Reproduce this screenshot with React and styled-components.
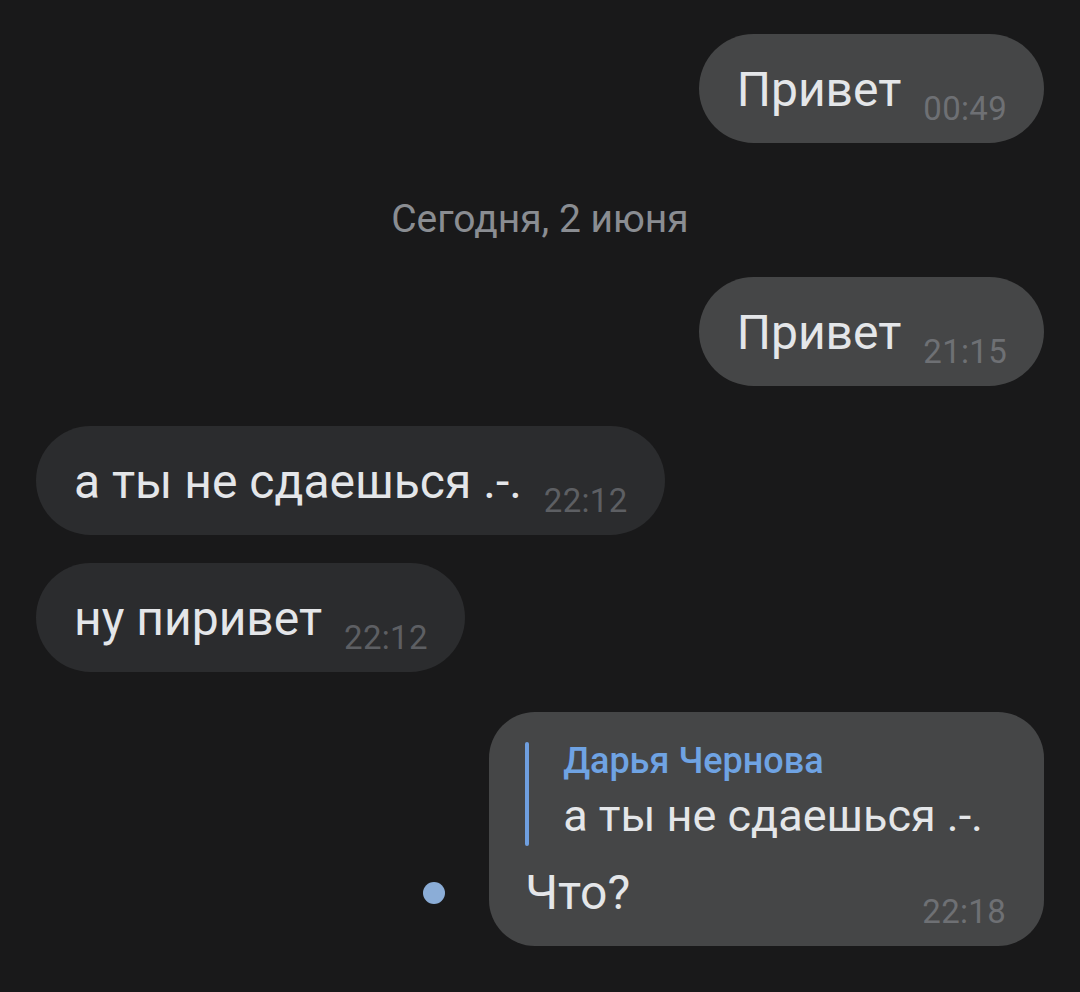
import React from "react";
import styled, { createGlobalStyle } from "styled-components";

const Global = createGlobalStyle`
  html, body { margin: 0; padding: 0; background: #19191a; }
  body { font-family: Roboto, "Noto Sans", "Liberation Sans", sans-serif; }
`;

const Page = styled.div`
  width: 1080px;
  height: 992px;
  box-sizing: border-box;
  padding: 34px 36px 0;
  background: #19191a;
  display: flex;
  flex-direction: column;
  overflow: hidden;
`;

const Row = styled.div`
  display: flex;
  justify-content: ${(p) => (p.$out ? "flex-end" : "flex-start")};
  align-items: flex-end;
  margin-top: ${(p) => p.$gap || 0}px;
`;

const Bubble = styled.div`
  display: flex;
  flex-direction: column;
  box-sizing: border-box;
  padding: ${(p) => (p.$reply ? "30px 38px 14px 36px" : "28px 37px 14px 38px")};
  border-radius: ${(p) => (p.$reply ? "46px" : "55px")};
  background: ${(p) => (p.$out ? "#454647" : "#2b2c2e")};
`;

const Line = styled.div`
  display: flex;
  align-items: flex-end;
  justify-content: space-between;
  gap: 22px;
  margin-top: ${(p) => p.$top || 0}px;
`;

const Text = styled.span`
  font-size: 48px;
  line-height: 56px;
  color: #e4e6e9;
  margin-bottom: 11px;
  white-space: nowrap;
`;

const Time = styled.span`
  font-size: 33px;
  line-height: 40px;
  letter-spacing: 0.3px;
  color: ${(p) => (p.$out ? "#6e7074" : "#5d5f63")};
  white-space: nowrap;
`;

const DateLabel = styled.div`
  text-align: center;
  font-size: 39px;
  line-height: 46px;
  color: #8a8d92;
  margin: 53px 0 0;
`;

const Quote = styled.div`
  display: flex;
  gap: 34px;
  padding-right: 23px;
`;

const QuoteBar = styled.div`
  width: 4px;
  border-radius: 2px;
  background: #6f9fdf;
`;

const QuoteBody = styled.div`
  display: flex;
  flex-direction: column;
  padding-bottom: 2px;
`;

const QuoteName = styled.span`
  font-size: 36px;
  line-height: 38px;
  font-weight: 500;
  color: #6fa3e3;
  white-space: nowrap;
`;

const QuoteText = styled.span`
  font-size: 45px;
  line-height: 56px;
  margin-top: 8px;
  color: #e4e6e9;
  white-space: nowrap;
`;

const UnreadDot = styled.div`
  width: 22px;
  height: 22px;
  border-radius: 50%;
  background: #8badd7;
  margin: 0 44px 42px 0;
`;

function Msg({ out, text, time }) {
  return (
    <Bubble $out={out}>
      <Line>
        <Text>{text}</Text>
        <Time $out={out}>{time}</Time>
      </Line>
    </Bubble>
  );
}

export default function App() {
  return (
    <>
      <Global />
      <Page>
        <Row $out>
          <Msg out text="Привет" time="00:49" />
        </Row>
        <DateLabel>Сегодня, 2 июня</DateLabel>
        <Row $out $gap={35}>
          <Msg out text="Привет" time="21:15" />
        </Row>
        <Row $gap={40}>
          <Msg text="а ты не сдаешься .-." time="22:12" />
        </Row>
        <Row $gap={28}>
          <Msg text="ну пиривет" time="22:12" />
        </Row>
        <Row $out $gap={40}>
          <UnreadDot />
          <Bubble $out $reply>
            <Quote>
              <QuoteBar />
              <QuoteBody>
                <QuoteName>Дарья Чернова</QuoteName>
                <QuoteText>а ты не сдаешься .-.</QuoteText>
              </QuoteBody>
            </Quote>
            <Line $top={19}>
              <Text>Что?</Text>
              <Time $out>22:18</Time>
            </Line>
          </Bubble>
        </Row>
      </Page>
    </>
  );
}
